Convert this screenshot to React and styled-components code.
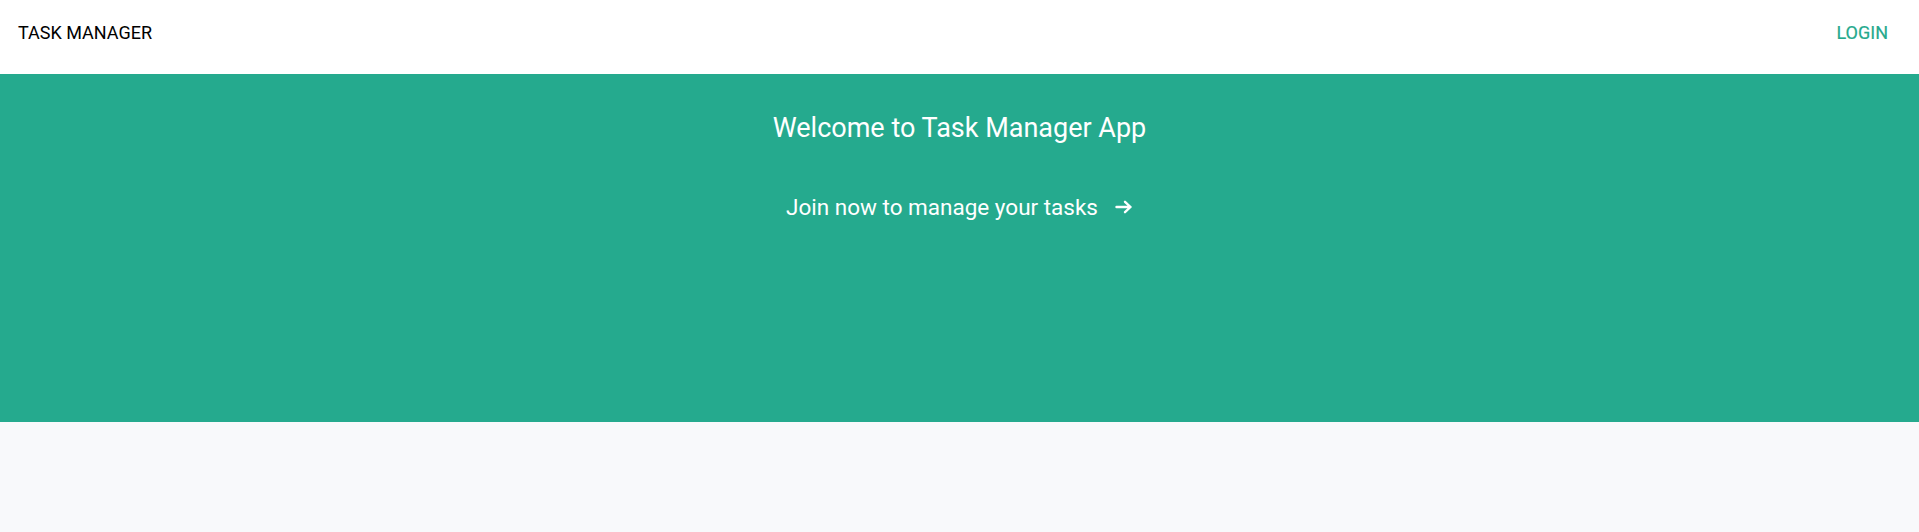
import React from "react";
import styled, { createGlobalStyle } from "styled-components";

export default function App() {
  return (
    <Page>
      <GlobalStyle />
      <Navbar>
        <Brand>TASK MANAGER</Brand>
        <LoginLink href="#">LOGIN</LoginLink>
      </Navbar>
      <Hero>
        <Title>Welcome to Task Manager App</Title>
        <JoinLink href="#">
          Join now to manage your tasks
          <Arrow viewBox="0 0 18 14" aria-hidden="true">
            <path d="M1.5 7h14M10 1.8L15.5 7 10 12.2" />
          </Arrow>
        </JoinLink>
      </Hero>
      <Body />
    </Page>
  );
}

// Styling
const GlobalStyle = createGlobalStyle`
  html, body {
    margin: 0;
    padding: 0;
    background-color: #f8f9fb;
    font-family: Roboto, "Liberation Sans", sans-serif;
  }
`;
const Page = styled.div`
  display: flex;
  flex-direction: column;
  min-height: 532px;
`;
const Navbar = styled.header`
  height: 74px;
  background-color: #fff;
  display: flex;
  align-items: center;
  justify-content: space-between;
  padding: 0 31px 10px 18px;
  box-sizing: border-box;
`;
const Brand = styled.div`
  font-size: 18px;
  color: #000;
`;
const LoginLink = styled.a`
  font-size: 18px;
  color: #25a98d;
  text-decoration: none;
  -webkit-text-stroke: 0.2px #25a98d;
`;
const Hero = styled.section`
  height: 348px;
  background-color: #25aa8e;
  display: flex;
  flex-direction: column;
  align-items: center;
  padding-top: 37px;
  box-sizing: border-box;
`;
const Title = styled.h1`
  margin: 0;
  font-size: 27px;
  font-weight: 400;
  color: #fff;
  line-height: 34px;
`;
const JoinLink = styled.a`
  margin-top: 48px;
  display: flex;
  align-items: center;
  gap: 17px;
  font-size: 22.5px;
  color: #fff;
  text-decoration: none;
  line-height: 28px;
`;
const Arrow = styled.svg`
  width: 18px;
  height: 14px;
  fill: none;
  stroke: #fff;
  stroke-width: 2.4;
  stroke-linecap: round;
  stroke-linejoin: round;
`;
const Body = styled.main`
  flex: 1;
  background-color: #f8f9fb;
`;
